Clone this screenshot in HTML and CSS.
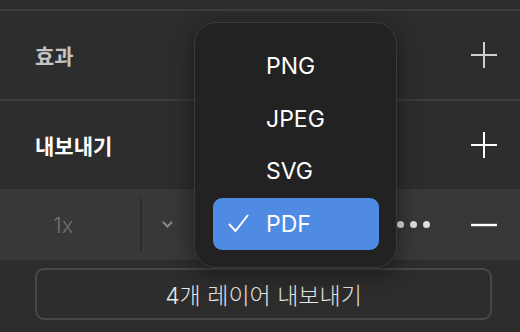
FILE: index.html
```html
<!DOCTYPE html>
<html lang="ko">
<head>
    <meta charset="UTF-8">
    <meta name="viewport" content="width=device-width, initial-scale=1.0">
    <title>내보내기</title>
    <link rel="stylesheet" href="styles.css">
</head>
<body>
    <div class="panel">
        <div class="topbar"></div>

        <!-- Effects section -->
        <div class="section section-border">
            <span class="section-title muted">효과</span>
            <svg class="icon-plus muted-icon" width="26" height="26" viewBox="0 0 26 26">
                <path d="M13 0V26M0 13H26" stroke="currentColor" stroke-width="2" fill="none"/>
            </svg>
        </div>

        <!-- Export section -->
        <div class="section">
            <span class="section-title">내보내기</span>
            <svg class="icon-plus" width="26" height="26" viewBox="0 0 26 26">
                <path d="M13 0V26M0 13H26" stroke="currentColor" stroke-width="2" fill="none"/>
            </svg>
        </div>

        <div class="export-row">
            <span class="scale">1x</span>
            <span class="divider"></span>
            <span class="chevron">
                <svg width="11" height="7" viewBox="0 0 11 7">
                    <path d="M1 1L5.5 5.5L10 1" stroke="currentColor" stroke-width="2" fill="none"/>
                </svg>
            </span>
            <span class="spacer"></span>
            <span class="dots"><i></i><i></i><i></i></span>
            <svg class="icon-minus" width="26" height="4" viewBox="0 0 26 4">
                <path d="M0 2H26" stroke="currentColor" stroke-width="2.4"/>
            </svg>
        </div>

        <div class="button-wrap">
            <button class="export-btn">4개 레이어 내보내기</button>
        </div>

        <!-- Format dropdown -->
        <div class="dropdown">
            <div class="option">PNG</div>
            <div class="option">JPEG</div>
            <div class="option">SVG</div>
            <div class="option selected">
                <svg class="check" width="21" height="19" viewBox="0 0 21 19">
                    <path d="M1 10L7.5 17L20 1" stroke="currentColor" stroke-width="2" fill="none"/>
                </svg>
                PDF
            </div>
        </div>
    </div>
</body>
</html>
```

FILE: styles.css
```css
body {
    margin: 0;
    background: #2d2d2d;
    font-family: 'Inter', 'Noto Sans CJK KR', sans-serif;
    color: #fff;
    overflow: hidden;
}

.panel {
    position: relative;
    width: 520px;
    height: 332px;
}

.topbar {
    height: 9px;
    border-bottom: 2px solid #3c3c3c;
}

.section {
    height: 88px;
    display: flex;
    align-items: center;
    justify-content: space-between;
    padding: 0 23px 0 35px;
}

.section-border {
    border-bottom: 2px solid #3c3c3c;
}

.section-title {
    font-size: 21px;
    font-weight: 700;
    color: #fff;
}

.section-title.muted {
    color: #c4c4c4;
}

.icon-plus {
    color: #fff;
}

.muted-icon {
    color: #cfcfcf;
}

.export-row {
    height: 71px;
    background: #383838;
    display: flex;
    align-items: center;
    padding: 0 23px 0 53px;
}

.scale {
    width: 87px;
    font-size: 22px;
    font-weight: 300;
    color: #707070;
}

.divider {
    width: 2px;
    height: 53px;
    background: #2c2c2c;
}

.chevron {
    margin-left: 20px;
    color: #8a8a8a;
    display: flex;
}

.spacer {
    flex: 1;
}

.dots {
    display: flex;
    gap: 6px;
    margin-right: 41px;
}

.dots i {
    width: 7px;
    height: 7px;
    border-radius: 50%;
    background: #dedede;
}

.icon-minus {
    color: #fff;
}

.button-wrap {
    padding: 8px 28px 0 35px;
}

.export-btn {
    width: 100%;
    height: 52px;
    background: transparent;
    border: 2px solid #484848;
    border-radius: 9px;
    color: #e6e6e6;
    font-family: 'Inter', 'Noto Sans CJK KR', sans-serif;
    font-size: 23px;
    font-weight: 300;
}

/* Format menu that sits over the panel */
.dropdown {
    position: absolute;
    left: 194px;
    top: 22px;
    width: 166px;
    padding: 17px 17px 17px 18px;
    background: #222;
    border: 1px solid #3a3a3a;
    border-radius: 22px;
    box-shadow: 0 6px 24px rgba(0, 0, 0, 0.45);
}

.option {
    height: 52.5px;
    display: flex;
    align-items: center;
    padding-left: 53px;
    font-size: 23px;
    color: #fff;
    position: relative;
}

.option.selected {
    background: #4f8ae3;
    border-radius: 9px;
}

.check {
    position: absolute;
    left: 15px;
    top: 16px;
}
```
